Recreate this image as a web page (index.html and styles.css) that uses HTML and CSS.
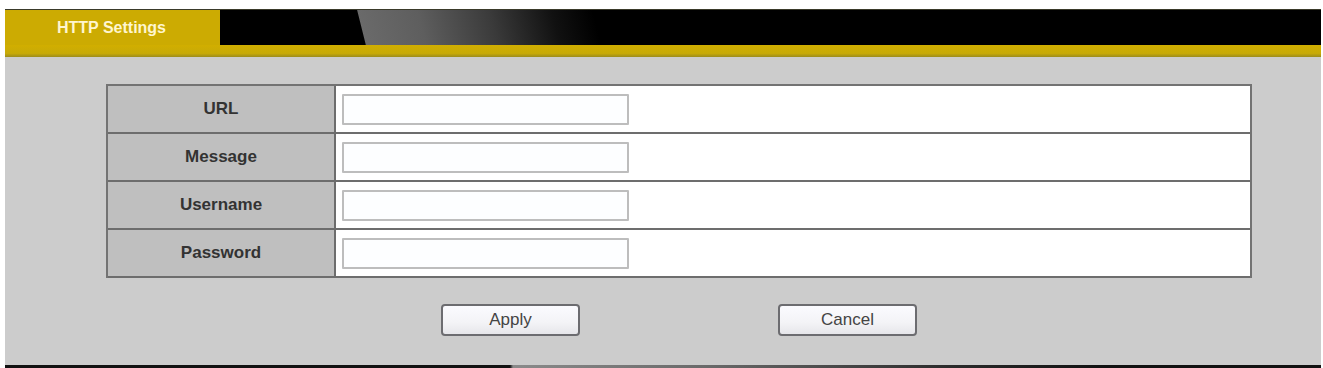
FILE: index.html
```html
<!DOCTYPE html>
<html>
<head>
<meta charset="utf-8">
<link rel="stylesheet" href="styles.css">
</head>
<body>
<div class="frame">
  <div class="header">
    <div class="tabrow">
      <div class="tab">HTTP Settings</div>
      <div class="bar"></div>
    </div>
    <div class="stripe"></div>
  </div>
  <div class="panel">
    <div class="form">
      <div class="row"><div class="label">URL</div><div class="value"><input class="field" type="text"></div></div>
      <div class="row"><div class="label">Message</div><div class="value"><input class="field" type="text"></div></div>
      <div class="row"><div class="label">Username</div><div class="value"><input class="field" type="text"></div></div>
      <div class="row"><div class="label">Password</div><div class="value"><input class="field" type="password"></div></div>
    </div>
    <div class="actions">
      <button class="btn" type="button">Apply</button>
      <button class="btn" type="button">Cancel</button>
    </div>
  </div>
  <div class="footer"></div>
</div>
</body>
</html>
```

FILE: styles.css
```css
html, body {
  margin: 0;
  padding: 0;
  background: #ffffff;
  font-family: "Liberation Sans", Arial, sans-serif;
}

.frame {
  margin-left: 5px;
  width: 1316px;
  padding-top: 9px;
}

.header {
  display: flex;
  flex-direction: column;
}

.tabrow {
  display: flex;
  height: 36px;
  border-top: 1px solid #3a3a2a;
  box-sizing: border-box;
}

.tab {
  width: 215px;
  background: #ccab02;
  color: #fff6cf;
  font-weight: bold;
  font-size: 16px;
  display: flex;
  align-items: center;
  justify-content: center;
  padding-right: 2px;
  box-sizing: border-box;
}

.bar {
  flex: 1;
  background: linear-gradient(76deg, #000 0, #000 141px, #6a6a6a 142px, #5e5e5e 200px, #3a3a3a 270px, #111 330px, #000 370px, #000 100%);
}

.stripe {
  height: 12px;
  background: linear-gradient(to bottom, #d1ae00 0, #c7aa08 70%, #9c8c1c 100%);
}

.panel {
  background: #cccccc;
  padding: 27px 0 29px;
}

.form {
  margin-left: 101px;
  width: 1146px;
  border: 2px solid #737373;
  border-bottom: 0;
  box-sizing: border-box;
  background: #ffffff;
}

.row {
  display: grid;
  grid-template-columns: 228px 1fr;
  height: 48px;
  border-bottom: 2px solid #6d6d6d;
  box-sizing: border-box;
}

.label {
  background: #bfbfbf;
  border-right: 2px solid #6d6d6d;
  display: flex;
  align-items: center;
  justify-content: center;
  font-weight: bold;
  font-size: 17px;
  color: #333333;
}

.value {
  display: flex;
  align-items: center;
  padding-left: 6px;
}

.field {
  width: 287px;
  height: 31px;
  box-sizing: border-box;
  border: 2px solid #bdbdbd;
  border-radius: 1px;
  background: #fdfeff;
  margin: 0;
  padding: 2px 4px;
  font: 14px "Liberation Sans", Arial, sans-serif;
}

.actions {
  display: flex;
  justify-content: center;
  gap: 198px;
  margin-top: 26px;
  padding-left: 32px;
}

.btn {
  width: 139px;
  height: 32px;
  box-sizing: border-box;
  border: 2px solid #6c6c70;
  border-radius: 4px;
  background: linear-gradient(to bottom, #fbfbff 0, #f3f3f6 60%, #e6e6ea 100%);
  font: 17px "Liberation Sans", Arial, sans-serif;
  color: #444444;
  padding: 0;
  margin: 0;
}

.footer {
  height: 4px;
  background: linear-gradient(to right, #111 0, #111 505px, #8a8a8a 508px, #6a6a6a 700px, #2a2a2a 950px, #111 1100px, #111 100%);
}
```
